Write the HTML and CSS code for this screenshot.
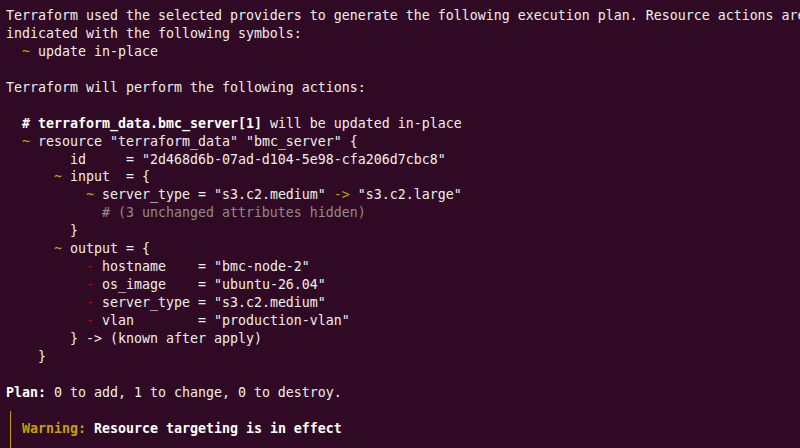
FILE: index.html
```html
<!DOCTYPE html>
<html>
<head>
<meta charset="utf-8">
<link rel="stylesheet" href="styles.css">
</head>
<body>
<div class="term">
<div class="ln">Terraform used the selected providers to generate the following execution plan. Resource actions are</div>
<div class="ln">indicated with the following symbols:</div>
<div class="ln">  <span class="y">~</span> update in-place</div>
<div class="ln"> </div>
<div class="ln">Terraform will perform the following actions:</div>
<div class="ln"> </div>
<div class="ln">  <span class="b"># terraform_data.bmc_server[1]</span> will be updated in-place</div>
<div class="ln">  <span class="y">~</span> resource "terraform_data" "bmc_server" {</div>
<div class="ln">        id     = "2d468d6b-07ad-d104-5e98-cfa206d7cbc8"</div>
<div class="ln">      <span class="y">~</span> input  = {</div>
<div class="ln">          <span class="y">~</span> server_type = "s3.c2.medium" <span class="y">-&gt;</span> "s3.c2.large"</div>
<div class="ln">            <span class="dim"># (3 unchanged attributes hidden)</span></div>
<div class="ln">        }</div>
<div class="ln">      <span class="y">~</span> output = {</div>
<div class="ln">          <span class="r">-</span> hostname    = "bmc-node-2"</div>
<div class="ln">          <span class="r">-</span> os_image    = "ubuntu-26.04"</div>
<div class="ln">          <span class="r">-</span> server_type = "s3.c2.medium"</div>
<div class="ln">          <span class="r">-</span> vlan        = "production-vlan"</div>
<div class="ln">        } -&gt; (known after apply)</div>
<div class="ln">    }</div>
<div class="ln"> </div>
<div class="ln"><span class="b">Plan:</span> 0 to add, 1 to change, 0 to destroy.</div>
<div class="warn">
<div class="ln"><span class="b y">Warning:</span> <span class="b">Resource targeting is in effect</span></div>
<div class="ln"> </div>
</div>
</div>
</body>
</html>
```
FILE: styles.css
```css
html, body {
  margin: 0;
  padding: 0;
  background: #300a24;
  width: 800px;
  height: 448px;
  overflow: hidden;
}
.term {
  padding: 7px 0 0 6px;
  font-family: "DejaVu Sans Mono", "Liberation Mono", monospace;
  font-size: 13.29px;
  line-height: 17.95px;
  color: #eeeeec;
}
.ln {
  height: 17.95px;
  white-space: pre;
}
.y { color: #c4a000; }
.r { color: #cc0000; }
.b { font-weight: bold; color: #ffffff; }
.b.y { color: #c4a000; }
.dim { color: #8f8b8d; }
.warn {
  margin-top: 9px;
  margin-left: 4px;
  padding-top: 9px;
  padding-left: 11px;
  border-left: 1px solid #c4a000;
}
```
